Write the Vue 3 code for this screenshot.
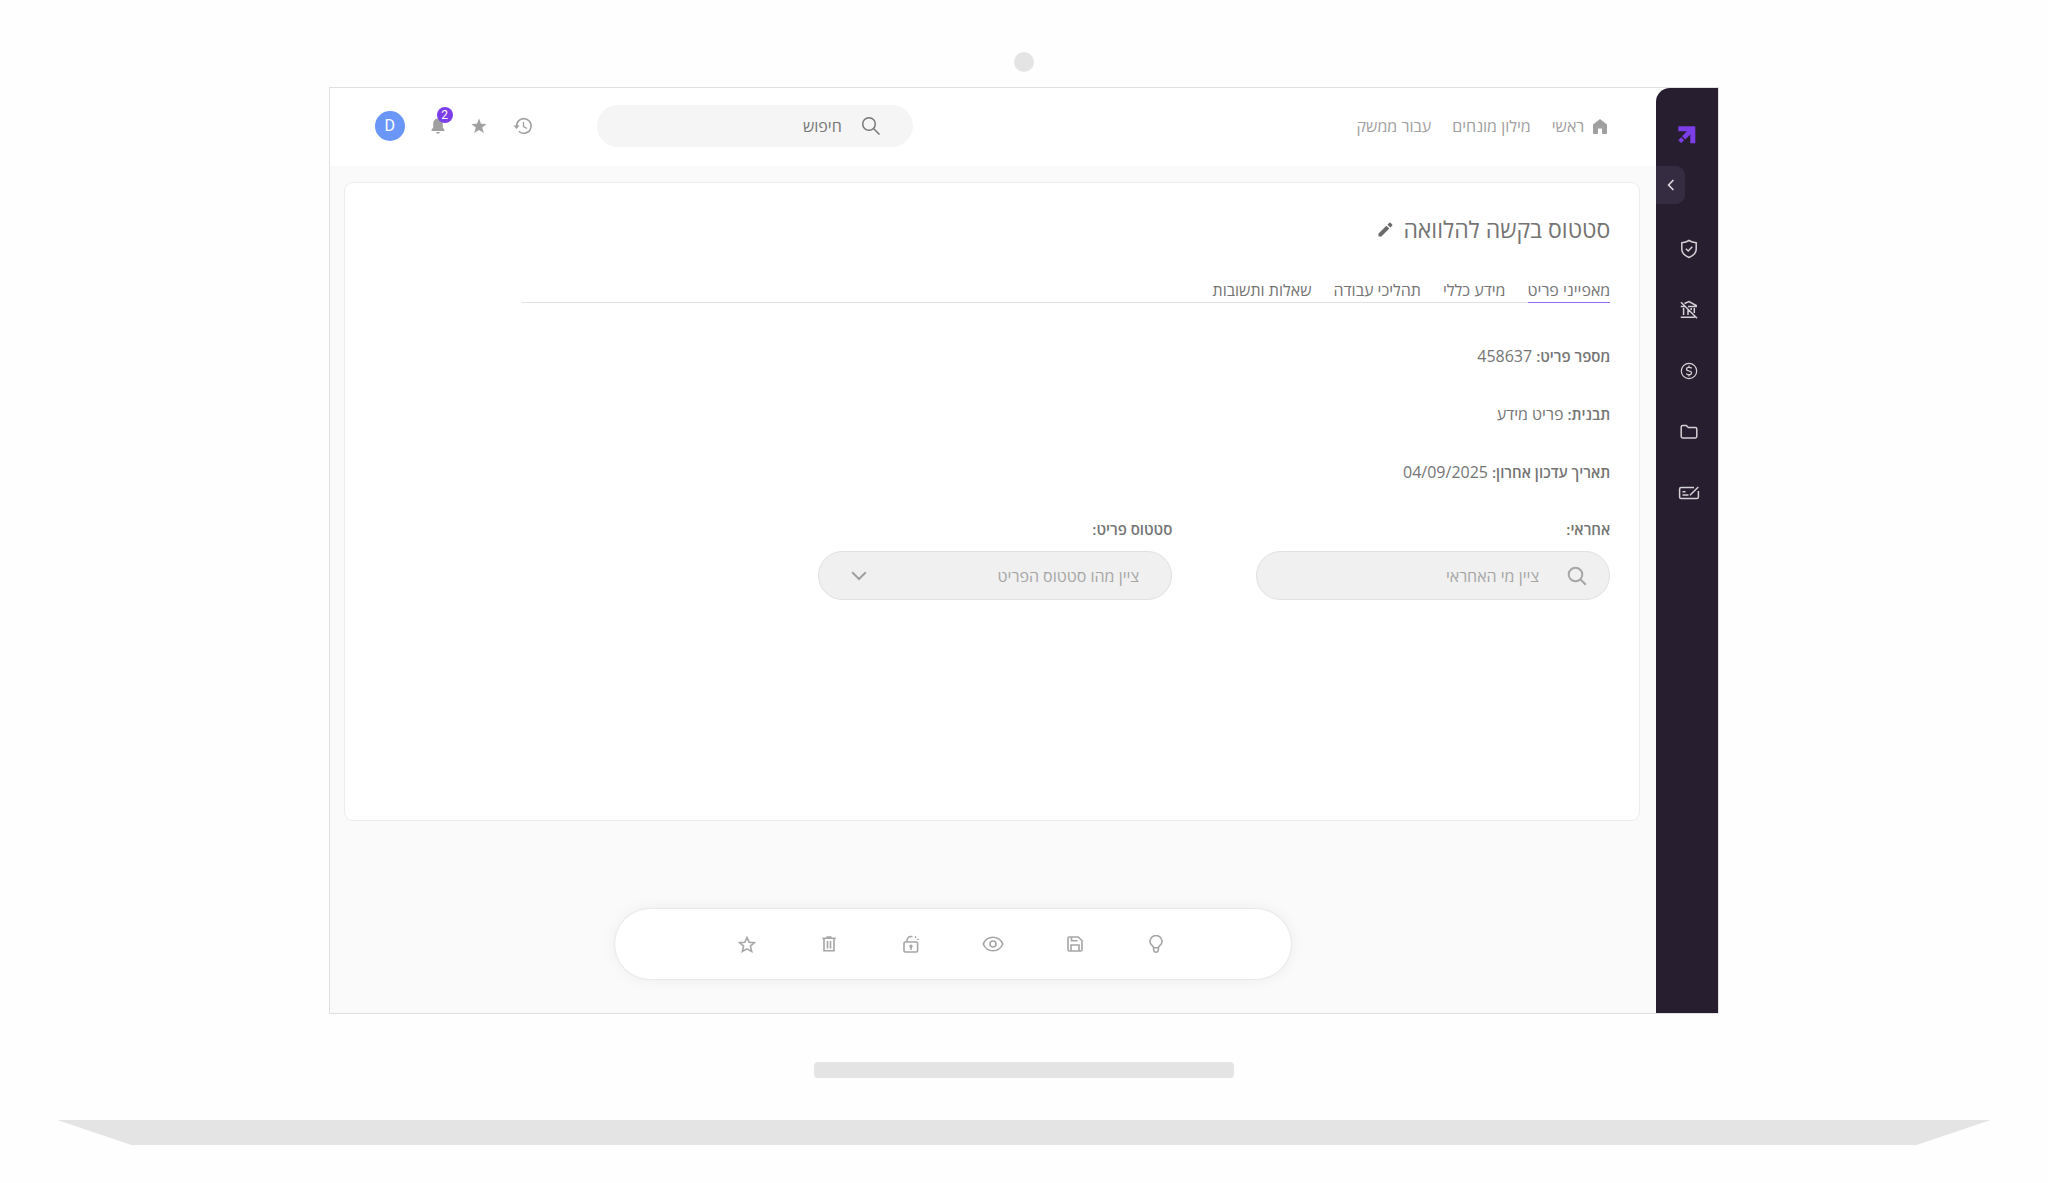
<script setup>
import { ref } from 'vue'

const query = ref('')
const owner = ref('')
const status = ref('')

const details = [
  { label: 'מספר פריט:', value: '458637' },
  { label: 'תבנית:', value: 'פריט מידע' },
  { label: 'תאריך עדכון אחרון:', value: '04/09/2025' },
]
const tabs = ['מאפייני פריט', 'מידע כללי', 'תהליכי עבודה', 'שאלות ותשובות']
</script>

<template>
  <div class="laptop">
    <div class="camera"></div>

    <div class="screen" dir="rtl" lang="he">
      <aside class="sidebar">
        <a class="logo" href="#" aria-label="דף הבית">
          <svg width="18" height="18" viewBox="0 0 18 18" fill="#7c3ee8">
            <path d="M.3.3H16.300Q17.300.3 17.300 1.300V17.300H12.300V8.500L7.300 13.400 4.100 10.200 8.900 5.200H.3Z" />
            <path d="M3.200 11.300 6.100 14.200 3.200 17.100.3 14.200Z" />
          </svg>
        </a>
        <button class="collapse" type="button" aria-label="כיווץ תפריט">
          <svg width="8" height="12" viewBox="0 0 8 12" fill="none" stroke="#dedce2" stroke-width="1.6"><path d="M6.4 1 1.6 6l4.8 5" /></svg>
        </button>
        <nav class="side-nav">
          <a href="#" aria-label="אבטחה">
            <svg width="18" height="20" viewBox="0 0 18 20"><path d="M9 1.500c2.200 1.400 4.400 2 7.200 2.200V10c0 4-2.700 6.600-7.200 8.500C4.500 16.600 1.800 14 1.800 10V3.700C4.600 3.500 6.800 2.900 9 1.500Z" /><path d="m5.900 9.700 2.300 2.300 4.100-4.300" /></svg>
          </a>
          <a href="#" aria-label="בנק">
            <svg width="20" height="20" viewBox="0 0 20 20"><path d="M5.500 3.500 10 1.500l7.200 4v1H9M1.800 6.600h4M4.600 8v7M9 10v5M12.200 8v2M15.300 8v5M1.800 17.200h14M2 2.200l16 16" /></svg>
          </a>
          <a href="#" aria-label="כספים">
            <svg width="18" height="18" viewBox="0 0 18 18" class="fine"><circle cx="9" cy="9" r="7.700" /><path d="M11.500 6.500c0-.8-.8-1.200-2.500-1.200s-2.500.6-2.500 1.800S7.400 8.800 9 9s2.500.7 2.500 1.900-.9 1.800-2.500 1.800-2.500-.5-2.500-1.300M9 3.500v1.800M9 12.700v1.900" /></svg>
          </a>
          <a href="#" aria-label="תיקיות">
            <svg width="18" height="16" viewBox="0 0 18 16"><path d="M2.700 1.500h3.600l2 2h7q1.500 0 1.500 1.500v7.500q0 1.400-1.500 1.400H2.700q-1.500 0-1.500-1.400V3q0-1.500 1.500-1.500Z" /></svg>
          </a>
          <a href="#" aria-label="המחאות">
            <svg width="22" height="16" viewBox="0 0 22 16"><path d="M16 2.500H3.200Q1.600 2.500 1.600 4v8q0 1.600 1.600 1.600h15.600q1.600 0 1.600-1.600V6M4.500 6.700h3M4.500 10h6M12 10.300l8.300-8.300" /></svg>
          </a>
        </nav>
      </aside>

      <div class="main">
        <header class="topbar">
          <nav class="crumbs">
            <a href="#" class="home">
              <svg width="14" height="15" viewBox="0 0 14 15" fill="#a0a0a0"><path d="M7 0 14 5.500V15H9V9.500H5V15H0V5.500Z" /></svg>
              <span>ראשי</span>
            </a>
            <a href="#">מילון מונחים</a>
            <a href="#">עבור ממשק</a>
          </nav>
          <label class="search">
            <svg width="20" height="20" viewBox="0 0 20 20" fill="none" stroke="#777" stroke-width="1.500"><circle cx="8" cy="8" r="6.300" /><path d="m12.500 12.500 6 6" /></svg>
            <input v-model="query" type="text" placeholder="חיפוש" aria-label="חיפוש" />
          </label>
          <div class="actions">
            <button type="button" aria-label="היסטוריה">
              <svg width="20" height="18" viewBox="0 0 20 18" fill="none" stroke="#a0a0a0" stroke-width="1.600"><path d="M3.600 9a7.300 7.300 0 1 1 2.200 5.200" /><path d="M10.500 4.800V9.500l3.500 2" stroke-width="1.300" /><path d="M.5 8.500h6.200L3.600 12Z" fill="#a0a0a0" stroke="none" /></svg>
            </button>
            <button type="button" aria-label="מועדפים">
              <svg width="16" height="16" viewBox="0 0 16 16" fill="#a0a0a0"><path d="m8 .5 2 5.200 5.600.2-4.400 3.500 1.600 5.600L8 11.900 3.200 15l1.600-5.600L.4 5.900l5.600-.2Z" /></svg>
            </button>
            <button type="button" class="bell" aria-label="התראות">
              <svg width="14" height="16" viewBox="0 0 14 16" fill="#a0a0a0"><path d="M7 .5c3 0 4.800 2 4.800 5v4L13.500 12v1H.5v-1l1.700-2.500v-4c0-3 1.800-5 4.800-5ZM5.200 14h3.600a1.800 1.800 0 0 1-3.600 0Z" /></svg>
              <span class="count">2</span>
            </button>
            <button type="button" class="avatar">D</button>
          </div>
        </header>

        <section class="card">
          <div class="title">
            <h1>סטטוס בקשה להלוואה</h1>
            <button type="button" aria-label="עריכה">
              <svg width="15" height="15" viewBox="0 0 15 15" fill="#6b6b6b"><path d="M.5 11.600V14.500H3.400L11.300 6.600 8.400 3.700ZM9.400 2.700l2.900 2.900 1.900-1.900q.5-.6 0-1.200L12.500.8q-.6-.5-1.200 0Z" /></svg>
            </button>
          </div>

          <nav class="tabs">
            <a v-for="(tab, i) in tabs" :key="tab" href="#" :class="{ active: i === 0 }">{{ tab }}</a>
          </nav>

          <dl class="details">
            <div v-for="row in details" :key="row.label">
              <dt>{{ row.label }}</dt>
              <dd>{{ row.value }}</dd>
            </div>
          </dl>

          <div class="fields">
            <div class="field">
              <label for="owner">אחראי:</label>
              <div class="control">
                <svg class="lead" width="20" height="20" viewBox="0 0 20 20" fill="none" stroke="#a6a6a6" stroke-width="2"><circle cx="8.500" cy="8.500" r="6.800" /><path d="m13.300 13.300 5.500 5.500" /></svg>
                <input id="owner" v-model="owner" type="text" placeholder="ציין מי האחראי" />
              </div>
            </div>
            <div class="field">
              <label for="status">סטטוס פריט:</label>
              <div class="control">
                <select id="status" v-model="status">
                  <option value="">ציין מהו סטטוס הפריט</option>
                </select>
                <svg class="chevron" width="16" height="10" viewBox="0 0 16 10" fill="none" stroke="#a0a0a0" stroke-width="2"><path d="m1.200 1.200 6.800 6.800 6.800-6.800" /></svg>
              </div>
            </div>
          </div>
        </section>

        <div class="toolbar" role="toolbar">
          <button type="button" aria-label="רעיון">
            <svg width="14" height="18" viewBox="0 0 14 18"><path d="M4.600 12.700C4.600 10.800 1 10 1 6.500a6 6 0 0 1 12 0c0 3.500-3.600 4.300-3.600 6.200ZM4.600 12.700v2.200Q5 17.200 7 17.200t2.400-2.300v-2.200" /></svg>
          </button>
          <button type="button" aria-label="שמירה">
            <svg width="16" height="16" viewBox="0 0 16 16"><path d="M2.300 1h8.900L15 4.800v8.900q0 1.300-1.300 1.300H2.300Q1 15 1 13.700V2.300Q1 1 2.300 1ZM4 15V9h8v6M4.500 1v3.700h6" /></svg>
          </button>
          <button type="button" aria-label="צפייה">
            <svg width="22" height="16" viewBox="0 0 22 16"><path d="M1.200 8C3.200 3.500 6.700 1.200 11 1.200S18.800 3.500 20.800 8C18.800 12.500 15.300 14.800 11 14.800S3.200 12.500 1.200 8Z" /><circle cx="11" cy="8" r="3" /></svg>
          </button>
          <button type="button" aria-label="פתיחת נעילה">
            <svg width="16" height="18" viewBox="0 0 16 18"><path d="M2.200 7h11.200q1.200 0 1.200 1.200v7.600q0 1.200-1.200 1.200H2.200Q1 17 1 15.800V8.200Q1 7 2.200 7ZM4 7V5.500Q4.500 1.600 8 1.500h1.500M8 11v4" /><path d="M12.500 1v2M13.800 4.500h2" stroke-width="1.200" /><circle cx="8" cy="11.300" r=".9" /></svg>
          </button>
          <button type="button" aria-label="מחיקה">
            <svg width="14" height="16" viewBox="0 0 14 16"><path d="M.3 2.300h13.400M4.500 1h5M2 2.300v12.500h10V2.300M5.500 5v7.500M8.500 5v7.500" /></svg>
          </button>
          <button type="button" aria-label="הוספה למועדפים">
            <svg width="18" height="17" viewBox="0 0 18 17"><path d="m9 1.500 2.100 4.700 5.200.5-3.900 3.400 1.300 5.400L9 12.900 4.300 15.500l1.300-5.400L1.700 6.700l5.200-.5Z" /></svg>
          </button>
        </div>
      </div>
    </div>

    <div class="stand"></div>
    <div class="base"></div>
  </div>
</template>

<style>
body {
  background: #fefefe;
}
</style>

<style scoped>
* {
  box-sizing: border-box;
}
.laptop {
  display: flex;
  flex-direction: column;
  align-items: center;
  padding: 52px 0 36px;
  font-family: "Open Sans", "Noto Sans", "DejaVu Sans", sans-serif;
  font-size: 16px;
  line-height: 24px;
  color: #747474;
}
a {
  color: inherit;
  text-decoration: none;
}
svg {
  display: block;
  flex: none;
}
button {
  display: flex;
  align-items: center;
  justify-content: center;
  padding: 0;
  border: 0;
  background: none;
  font: inherit;
  cursor: pointer;
}
input,
select {
  min-width: 0;
  padding: 0;
  border: 0;
  outline: 0;
  background: none;
  font: inherit;
  color: inherit;
}
input::placeholder {
  color: inherit;
  opacity: 1;
}
.camera {
  width: 20px;
  height: 20px;
  border-radius: 50%;
  background: #e4e4e4;
}
.screen {
  display: flex;
  width: 67.9%;
  margin-top: 15px;
  border: 1px solid #e0e0e0;
  background: #fff;
}
.sidebar {
  flex: none;
  width: 62px;
  border-top-left-radius: 14px;
  background: #271f30;
}
.logo {
  display: flex;
  justify-content: center;
  margin-top: 38px;
}
.collapse {
  width: 29px;
  height: 38px;
  margin: 22px auto 0 0;
  border-radius: 0 9px 9px 0;
  background: #352c41;
}
.side-nav {
  display: flex;
  flex-direction: column;
  align-items: center;
  gap: 37px;
  margin-top: 33px;
  padding-left: 4px;
}
.side-nav a {
  display: flex;
  align-items: center;
  justify-content: center;
  width: 24px;
  height: 24px;
}
.side-nav svg {
  fill: none;
  stroke: #d4d2d6;
  stroke-width: 1.5;
}
.side-nav .fine {
  stroke-width: 1.2;
}
.main {
  flex: 1;
  min-width: 0;
  padding-bottom: 34px;
  background: #fafafa;
}
.topbar {
  display: flex;
  align-items: center;
  height: 78px;
  padding: 0 49px 2px 45px;
  background: #fff;
  color: #a0a0a0;
}
.crumbs,
.home {
  display: flex;
  align-items: center;
}
.crumbs {
  gap: 21px;
}
.home {
  gap: 9px;
}
.search {
  display: flex;
  align-items: center;
  gap: 19px;
  width: 316px;
  height: 42px;
  margin-right: auto;
  margin-left: 64px;
  padding: 0 32px;
  border-radius: 21px;
  background: #f5f5f5;
  color: #777;
}
.search input {
  flex: 1;
}
.actions {
  display: flex;
  align-items: center;
  gap: 26px;
}
.bell {
  position: relative;
}
.count {
  position: absolute;
  top: -11px;
  left: 6px;
  width: 16px;
  height: 16px;
  border-radius: 50%;
  background: #7c3ee8;
  color: #fff;
  font-family: Roboto, sans-serif;
  font-size: 12px;
  line-height: 16px;
  text-align: center;
}
.avatar {
  width: 30px;
  height: 30px;
  border-radius: 50%;
  background: #6a96f8;
  color: #fff;
  font-family: Roboto, sans-serif;
}
.card {
  min-height: 639px;
  margin: 16px 16px 0 14px;
  padding: 30px 29px;
  border: 1px solid #ececec;
  border-radius: 9px;
  background: #fff;
}
.title {
  display: flex;
  align-items: center;
  gap: 10px;
}
h1 {
  margin: 0;
  font-size: 23px;
  font-weight: 400;
  line-height: 32px;
}
.tabs {
  display: flex;
  gap: 22px;
  width: 88%;
  margin-top: 33px;
  border-bottom: 1px solid #e0e0e0;
}
.tabs a {
  margin-bottom: -1px;
  border-bottom: 1px solid transparent;
}
.tabs .active {
  border-color: #9b6cf0;
}
.details {
  display: flex;
  flex-direction: column;
  gap: 34px;
  margin: 41px 0 0;
}
.details div {
  display: flex;
  gap: 4px;
}
dt,
.field label {
  font-size: 15px;
  font-weight: 600;
}
dd {
  margin: 0;
}
.fields {
  display: flex;
  gap: 84px;
  margin-top: 33px;
}
.field {
  display: flex;
  flex-direction: column;
  gap: 10px;
  width: 354px;
}
.control {
  position: relative;
  display: flex;
  height: 49px;
  border: 1px solid #e0e0e0;
  border-radius: 25px;
  background: #f0f0f0;
  color: #a6a6a6;
}
.control input,
.control select {
  width: 100%;
  padding: 0 70px 0 32px;
  border-radius: 25px;
  appearance: none;
}
.control select {
  padding: 0 32px 0 70px;
}
.lead,
.chevron {
  position: absolute;
  pointer-events: none;
}
.lead {
  top: 14px;
  right: 22px;
}
.chevron {
  top: 19px;
  left: 32px;
}
.toolbar {
  display: flex;
  align-items: center;
  justify-content: space-between;
  width: 51%;
  height: 70px;
  margin: 88px 27.5% 0 0;
  padding: 0 123px 0 120px;
  border-radius: 35px;
  background: #fff;
  box-shadow: 0 0 2px #00000022, 0 0 16px #0000000f;
}
.toolbar button {
  width: 24px;
  height: 24px;
}
.toolbar svg {
  fill: none;
  stroke: #a6a6a6;
  stroke-width: 1.6;
}
.stand {
  width: 20.5%;
  height: 16px;
  margin-top: 48px;
  border-radius: 4px;
  background: #e4e4e4;
}
.base {
  width: 94.4%;
  height: 25px;
  margin-top: 42px;
  background: #e4e4e4;
  clip-path: polygon(0 0, 100% 0, calc(100% - 74px) 100%, 74px 100%);
}
</style>
